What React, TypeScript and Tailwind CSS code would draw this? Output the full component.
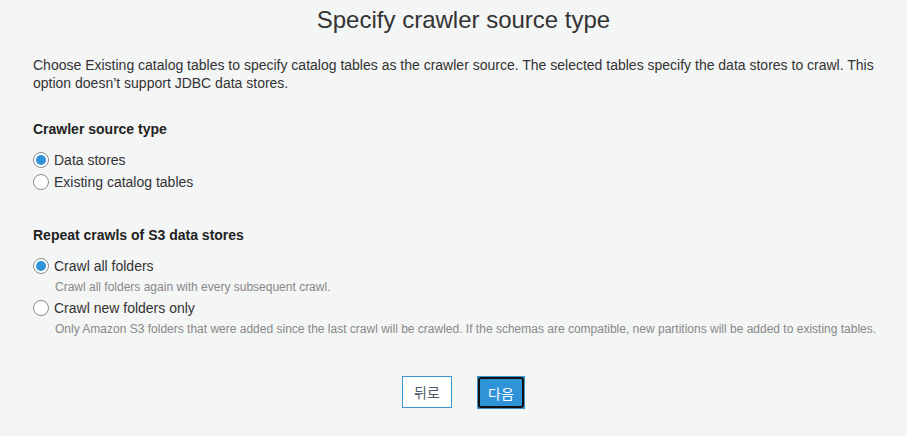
import React, { useState } from "react";

function Radio({ checked, onChange, label }: { checked: boolean; onChange: () => void; label: string }) {
  return (
    <label className="flex items-center h-[22px] cursor-pointer" onClick={onChange}>
      <span className="w-[16px] h-[16px] rounded-full border border-[#8a8a8a] bg-white flex items-center justify-center shrink-0">
        {checked && <span className="w-[10px] h-[10px] rounded-full bg-[#2f93d7]" />}
      </span>
      <span className="ml-[5px] text-[14px] leading-[22px] text-[#333]">{label}</span>
    </label>
  );
}

export default function App() {
  const [src, setSrc] = useState("data");
  const [rep, setRep] = useState("all");
  return (
    <div className="min-h-screen bg-[#f4f5f5] font-['Liberation_Sans',Arial,sans-serif] text-[#333]">
      <h1 className="text-[24px] leading-[28px] text-center pt-[6px] pl-[20px] text-[#333]">Specify crawler source type</h1>
      <div className="px-[33px]">
        <p className="mt-[22px] text-[14px] leading-[18px] text-[#333]">
          Choose Existing catalog tables to specify catalog tables as the crawler source. The selected tables specify the data stores to crawl. This option doesn’t support JDBC data stores.
        </p>
        <h2 className="mt-[28px] text-[14px] font-bold leading-[18px] text-[#222]">Crawler source type</h2>
        <div className="mt-[11px] flex flex-col">
          <Radio checked={src === "data"} onChange={() => setSrc("data")} label="Data stores" />
          <Radio checked={src === "cat"} onChange={() => setSrc("cat")} label="Existing catalog tables" />
        </div>
        <h2 className="mt-[33px] text-[14px] font-bold leading-[18px] text-[#222]">Repeat crawls of S3 data stores</h2>
        <div className="mt-[11px] flex flex-col">
          <Radio checked={rep === "all"} onChange={() => setRep("all")} label="Crawl all folders" />
          <p className="ml-[22px] text-[12px] leading-[20px] text-[#888] whitespace-nowrap">Crawl all folders again with every subsequent crawl.</p>
          <Radio checked={rep === "new"} onChange={() => setRep("new")} label="Crawl new folders only" />
          <p className="ml-[22px] text-[12px] leading-[20px] text-[#888] whitespace-nowrap">
            Only Amazon S3 folders that were added since the last crawl will be crawled. If the schemas are compatible, new partitions will be added to existing tables.
          </p>
        </div>
        <div className="mt-[37px] pl-[20px] flex justify-center gap-[25px]">
          <button className="w-[50px] h-[32px] bg-white border border-[#3a95d3] text-[14px] text-[#505a66] font-['Noto_Sans_CJK_KR',sans-serif]">
            뒤로
          </button>
          <button className="w-[48px] h-[33px] bg-[#2f93d7] border border-[#3a95d3] p-0">
            <span className="block w-full h-full border-2 border-[#111] rounded-[3px] text-white text-[14px] leading-[29px] font-['Noto_Sans_CJK_KR',sans-serif]">
              다음
            </span>
          </button>
        </div>
      </div>
    </div>
  );
}
